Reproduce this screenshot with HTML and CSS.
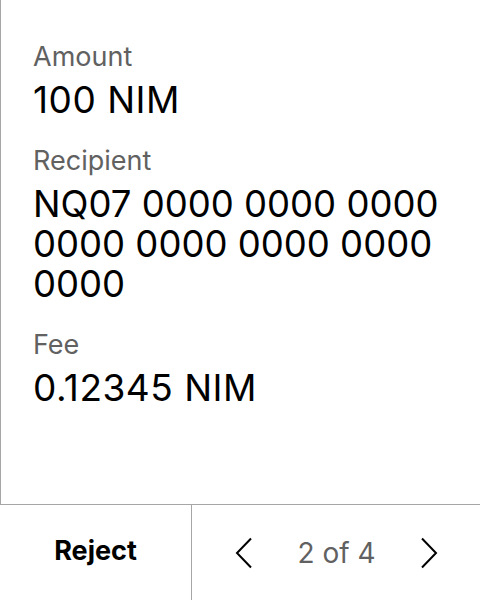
FILE: index.html
```html
<!DOCTYPE html>
<html>
<head>
<meta charset="utf-8">
<link rel="stylesheet" href="styles.css">
</head>
<body>
<div class="screen">
  <main class="details">
    <div class="field">
      <div class="label">Amount</div>
      <div class="value">100 NIM</div>
    </div>
    <div class="field">
      <div class="label">Recipient</div>
      <div class="value address">NQ07 0000 0000 0000 0000 0000 0000 0000 0000</div>
    </div>
    <div class="field">
      <div class="label">Fee</div>
      <div class="value">0.12345 NIM</div>
    </div>
  </main>
  <footer class="footer">
    <button class="reject">Reject</button>
    <div class="pager">
      <svg class="chev" width="20" height="32" viewBox="0 0 20 32"><path d="M17 1.5 L3 16 L17 30.5" fill="none" stroke="#000" stroke-width="2"/></svg>
      <span class="count">2 of 4</span>
      <svg class="chev" width="20" height="32" viewBox="0 0 20 32"><path d="M3 1.5 L17 16 L3 30.5" fill="none" stroke="#000" stroke-width="2"/></svg>
    </div>
  </footer>
</div>
</body>
</html>
```
FILE: styles.css
```css
html, body {
  margin: 0;
  padding: 0;
  background: #fff;
}
body {
  font-family: Inter, "Noto Sans", sans-serif;
  color: #000;
}
.screen {
  width: 480px;
  height: 600px;
  display: flex;
  flex-direction: column;
}
.details {
  flex: 1;
  border-left: 1px solid #a6a6a6;
  padding: 41px 28px 0 32px;
  display: flex;
  flex-direction: column;
  gap: 25px;
}
.label {
  font-size: 27px;
  line-height: 32px;
  color: #616161;
  margin-bottom: 7px;
}
.value {
  font-size: 37px;
  line-height: 40px;
  letter-spacing: 0.5px;
  color: #000;
}
.value.address {
  font-size: 36.5px;
  letter-spacing: 0;
}
.footer {
  height: 95px;
  border-top: 1px solid #a6a6a6;
  display: grid;
  grid-template-columns: 192px 1fr;
}
.reject {
  border: none;
  background: none;
  border-right: 1px solid #a6a6a6;
  font-family: inherit;
  font-size: 27px;
  font-weight: 700;
  color: #000;
  padding: 0 0 4px 0;
}
.pager {
  display: flex;
  align-items: center;
  justify-content: space-between;
  padding: 0 41px 0 42px;
}
.count {
  font-size: 28px;
  color: #616161;
}
.chev {
  display: block;
}
```
